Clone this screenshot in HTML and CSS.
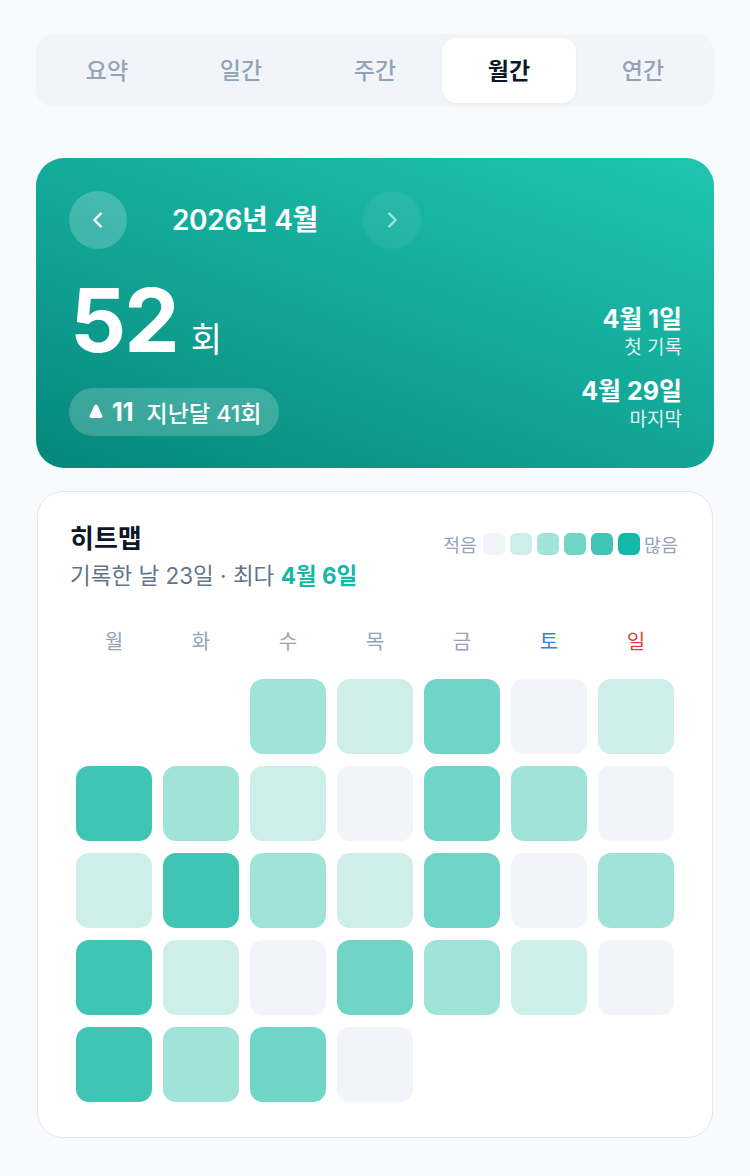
FILE: index.html
```html
<!DOCTYPE html>
<html lang="ko">
<head>
<meta charset="utf-8">
<link rel="stylesheet" href="styles.css">
</head>
<body>
<div class="page">
  <nav class="tabs">
    <div class="tab">요약</div>
    <div class="tab">일간</div>
    <div class="tab">주간</div>
    <div class="tab active">월간</div>
    <div class="tab">연간</div>
  </nav>

  <section class="hero">
    <div class="month-row">
      <button class="nav-btn">
        <svg width="22" height="22" viewBox="0 0 24 24"><path d="M15 5l-7 7 7 7" fill="none" stroke="#fff" stroke-width="2.6" stroke-linecap="round" stroke-linejoin="round"/></svg>
      </button>
      <div class="month-title">2026년 4월</div>
      <button class="nav-btn disabled">
        <svg width="22" height="22" viewBox="0 0 24 24"><path d="M9 5l7 7-7 7" fill="none" stroke="#fff" stroke-width="2.6" stroke-linecap="round" stroke-linejoin="round"/></svg>
      </button>
    </div>
    <div class="hero-body">
      <div class="hero-left">
        <div class="count"><span class="num">52</span><span class="unit">회</span></div>
        <div class="badge">
          <span class="delta"><svg class="tri" width="14" height="16" viewBox="0 0 14 16"><path d="M5.6 2.2c.6-1.1 2.2-1.1 2.8 0l5 10.6c.5 1-.3 2.2-1.4 2.2H2c-1.1 0-1.9-1.2-1.4-2.2z" fill="#fff"/></svg>11</span>
          <span class="prev">지난달 41회</span>
        </div>
      </div>
      <div class="hero-right">
        <div class="stat"><div class="stat-val">4월 1일</div><div class="stat-label">첫 기록</div></div>
        <div class="stat"><div class="stat-val">4월 29일</div><div class="stat-label">마지막</div></div>
      </div>
    </div>
  </section>

  <section class="card">
    <div class="card-head">
      <div>
        <h2 class="card-title">히트맵</h2>
        <p class="card-sub">기록한 날 23일 · 최다 <strong>4월 6일</strong></p>
      </div>
      <div class="legend">
        <span class="legend-text">적음</span>
        <span class="lg l0"></span><span class="lg l1"></span><span class="lg l2"></span><span class="lg l3"></span><span class="lg l4"></span><span class="lg l5"></span>
        <span class="legend-text">많음</span>
      </div>
    </div>
    <div class="weekdays">
      <span>월</span><span>화</span><span>수</span><span>목</span><span>금</span><span class="sat">토</span><span class="sun">일</span>
    </div>
    <div class="grid">
      <span class="cell blank"></span><span class="cell blank"></span><span class="cell l2"></span><span class="cell l1"></span><span class="cell l3"></span><span class="cell l0"></span><span class="cell l1"></span>
      <span class="cell l4"></span><span class="cell l2"></span><span class="cell l1"></span><span class="cell l0"></span><span class="cell l3"></span><span class="cell l2"></span><span class="cell l0"></span>
      <span class="cell l1"></span><span class="cell l4"></span><span class="cell l2"></span><span class="cell l1"></span><span class="cell l3"></span><span class="cell l0"></span><span class="cell l2"></span>
      <span class="cell l4"></span><span class="cell l1"></span><span class="cell l0"></span><span class="cell l3"></span><span class="cell l2"></span><span class="cell l1"></span><span class="cell l0"></span>
      <span class="cell l4"></span><span class="cell l2"></span><span class="cell l3"></span><span class="cell l0"></span>
    </div>
  </section>
</div>
</body>
</html>
```

FILE: styles.css
```css
* { box-sizing: border-box; }
html, body { margin: 0; padding: 0; }
body {
  background: #f8fafc;
  font-family: "Inter", "Noto Sans CJK KR", sans-serif;
  color: #0f172a;
  width: 750px;
  height: 1176px;
  overflow: hidden;
}
.page {
  padding: 34px 36px 0;
  display: flex;
  flex-direction: column;
}
.tabs {
  display: flex;
  background: #f1f5f9;
  border-radius: 18px;
  padding: 4px;
  height: 73px;
}
.tab {
  flex: 1;
  display: flex;
  align-items: center;
  justify-content: center;
  font-size: 23px;
  color: #94a3b8;
  font-weight: 500;
  border-radius: 14px;
  padding-bottom: 3px;
}
.tab.active {
  background: #ffffff;
  color: #0f172a;
  font-weight: 700;
  box-shadow: 0 1px 3px rgba(15, 23, 42, 0.05);
}

.hero {
  margin-top: 51px;
  height: 310px;
  border-radius: 28px;
  background: linear-gradient(20deg, #05877a 0%, #12a596 45%, #20c5b0 100%);
  padding: 33px 32px 0 33px;
  color: #fff;
}
.month-row {
  display: flex;
  align-items: center;
  gap: 44px;
}
.nav-btn {
  width: 58px;
  height: 58px;
  border-radius: 50%;
  border: none;
  background: rgba(255, 255, 255, 0.2);
  display: flex;
  align-items: center;
  justify-content: center;
  padding: 0;
}
.nav-btn.disabled {
  background: rgba(255, 255, 255, 0.1);
  opacity: 0.6;
}
.month-title {
  font-size: 28px;
  font-weight: 600;
  width: 148px;
  text-align: center;
  letter-spacing: -0.3px;
  white-space: nowrap;
  padding-bottom: 4px;
}
.hero-body {
  display: flex;
  justify-content: space-between;
  margin-top: 26px;
}
.hero-left {
  display: flex;
  flex-direction: column;
}
.count {
  display: flex;
  align-items: baseline;
  gap: 13px;
  height: 90px;
  margin-left: 1px;
}
.num {
  font-size: 88px;
  font-weight: 700;
  letter-spacing: -2px;
  line-height: 90px;
}
.unit {
  font-size: 34px;
  font-weight: 400;
}
.badge {
  margin-top: 23px;
  display: inline-flex;
  align-self: flex-start;
  align-items: center;
  gap: 13px;
  height: 48px;
  padding: 0 18px 0 20px;
  border-radius: 24px;
  background: rgba(255, 255, 255, 0.2);
  font-size: 23px;
}
.delta {
  font-weight: 700;
  font-size: 25px;
  display: inline-flex;
  align-items: center;
  gap: 9px;
}
.tri { margin-top: -2px; }
.prev { font-weight: 500; }
.hero-right {
  display: flex;
  flex-direction: column;
  align-items: flex-end;
  gap: 14px;
  padding-top: 29px;
}
.stat { text-align: right; }
.stat-val {
  font-size: 25px;
  font-weight: 700;
  line-height: 30px;
}
.stat-label {
  font-size: 19px;
  line-height: 28px;
  opacity: 0.88;
}

.card {
  margin-top: 23px;
  height: 647px;
  margin-left: 1px;
  margin-right: 1px;
  background: #ffffff;
  border: 1.5px solid #e2e8f0;
  border-radius: 26px;
  padding: 29px 34px 0 32px;
}
.card-head {
  display: flex;
  justify-content: space-between;
  align-items: flex-start;
  padding-right: 0;
}
.card-title {
  margin: 0;
  font-size: 26px;
  font-weight: 700;
  line-height: 36px;
  color: #0f172a;
}
.card-sub {
  margin: 4px 0 0;
  font-size: 22.5px;
  line-height: 30px;
  color: #64748b;
}
.card-sub strong {
  color: #14b8a6;
  font-weight: 700;
}
.legend {
  display: flex;
  align-items: center;
  gap: 5px;
  margin-top: 10px;
}
.legend-text {
  font-size: 18.5px;
  color: #94a3b8;
}
.legend-text:first-child { margin-right: 1px; }
.legend-text:last-child { margin-left: -1px; }
.lg {
  width: 22px;
  height: 22px;
  border-radius: 6px;
}
.l0 { background: #f1f5f9; }
.l1 { background: #cdeee9; }
.l2 { background: #a0e3d9; }
.l3 { background: #70d4c6; }
.l4 { background: #40c5b4; }
.l5 { background: #14b8a6; }

.weekdays {
  margin-top: 37px;
  display: grid;
  grid-template-columns: repeat(7, 1fr);
  column-gap: 11px;
  padding: 0 4px 0 6px;
  font-size: 20px;
  color: #94a3b8;
  text-align: center;
  line-height: 28px;
}
.weekdays .sat { color: #3b7ddd; }
.weekdays .sun { color: #dc3f3f; }
.grid {
  margin-top: 23px;
  display: grid;
  grid-template-columns: repeat(7, 1fr);
  grid-auto-rows: 75px;
  gap: 12px 11px;
  padding: 0 4px 0 6px;
}
.cell {
  border-radius: 13px;
}
.cell.blank { background: transparent; }
```
